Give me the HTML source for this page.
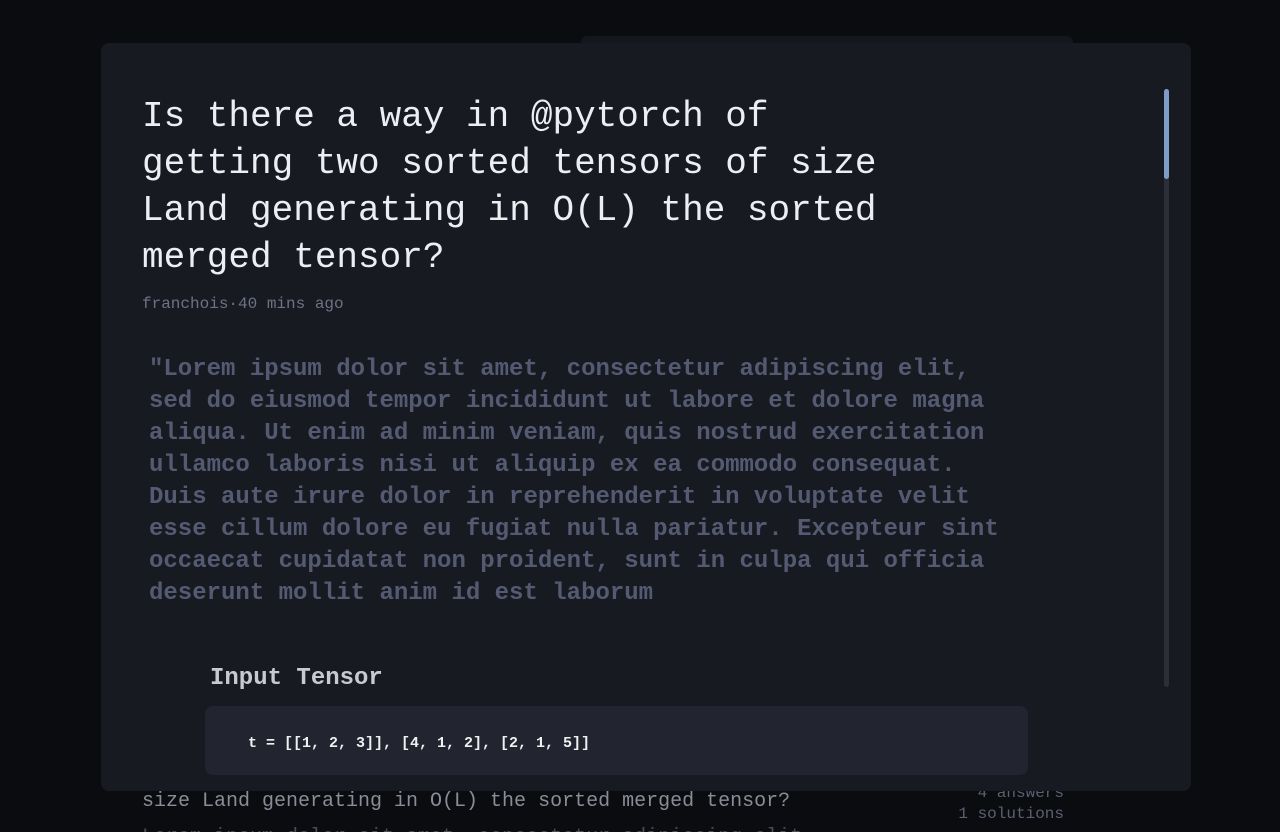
<!DOCTYPE html>
<html><head><style>
*{margin:0;padding:0;box-sizing:border-box}
html,body{width:1280px;height:832px;overflow:hidden}
body{background:#0b0c10;position:relative;font-family:"Liberation Mono",monospace}
.behind{position:absolute;left:581px;top:36px;width:492px;height:20px;background:#16171e;border-radius:6px}
.bt{position:absolute;left:142px;top:790px;font-size:20px;color:#8a8c96;white-space:nowrap}
.bt2{position:absolute;left:142px;top:826px;font-size:20px;color:#4a4c56;white-space:nowrap}
.st{position:absolute;right:216px;font-size:16px;color:#5a6070;text-align:right}
.modal{position:absolute;left:101px;top:43px;width:1090px;height:748px;background:#181a22;border-radius:8px}
.sb{position:absolute;left:1164px;top:89px;width:5px;height:598px;background:#2c2f38;border-radius:3px}
.sbt{position:absolute;left:1164px;top:89px;width:5px;height:90px;background:#7e9cc6;border-radius:3px}
h1{position:absolute;left:142px;top:93px;font-size:36px;line-height:47px;font-weight:normal;color:#eceef2;width:760px}
.meta{position:absolute;left:142px;top:295px;font-size:16px;color:#6e7284}
.body{position:absolute;left:149px;top:354px;font-size:24px;line-height:32px;font-weight:bold;color:#555a72;white-space:pre}
.it{position:absolute;left:210px;top:665px;font-size:24px;font-weight:bold;color:#c8cad2}
.code{position:absolute;left:205px;top:706px;width:823px;height:69px;background:#22242f;border-radius:8px}
.code span{position:absolute;left:43px;top:29px;font-size:15px;font-weight:bold;color:#f0f0f2;white-space:pre}
</style></head><body>
<div class="behind"></div>
<div class="bt">size Land generating in O(L) the sorted merged tensor?</div>
<div class="bt2">Lorem ipsum dolor sit amet, consectetur adipiscing elit</div>
<div class="st" style="top:784px">4 answers</div>
<div class="st" style="top:805px">1 solutions</div>
<div class="modal"></div>
<div class="sb"></div><div class="sbt"></div>
<h1>Is there a way in @pytorch of getting two sorted tensors of size Land generating in O(L) the sorted merged tensor?</h1>
<div class="meta">franchois·40 mins ago</div>
<div class="body">"Lorem ipsum dolor sit amet, consectetur adipiscing elit,
sed do eiusmod tempor incididunt ut labore et dolore magna
aliqua. Ut enim ad minim veniam, quis nostrud exercitation
ullamco laboris nisi ut aliquip ex ea commodo consequat.
Duis aute irure dolor in reprehenderit in voluptate velit
esse cillum dolore eu fugiat nulla pariatur. Excepteur sint
occaecat cupidatat non proident, sunt in culpa qui officia
deserunt mollit anim id est laborum</div>
<div class="it">Input Tensor</div>
<div class="code"><span>t = [[1, 2, 3]], [4, 1, 2], [2, 1, 5]]</span></div>
</body></html>
